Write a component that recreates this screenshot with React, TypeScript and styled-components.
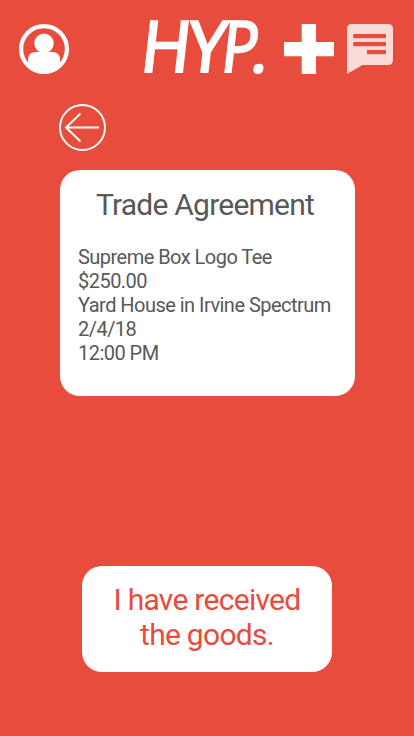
import React from "react";
import styled, { createGlobalStyle } from "styled-components";

const GlobalStyle = createGlobalStyle`
  * { box-sizing: border-box; }
  html, body { margin: 0; padding: 0; background: #e84c3d; }
  body { font-family: Roboto, "Liberation Sans", sans-serif; }
`;

const Screen = styled.main`
  width: 414px;
  height: 736px;
  background: #e84c3d;
  display: flex;
  flex-direction: column;
`;

const Header = styled.header`
  height: 104px;
  padding: 0 20px 0 19px;
  display: flex;
  align-items: flex-start;
`;

const IconButton = styled.button<{ $left?: number; $top?: number }>`
  flex: none;
  padding: 0;
  border: 0;
  background: none;
  margin: ${(p) => p.$top ?? 0}px 0 0 ${(p) => p.$left ?? 0}px;
  svg { display: block; }
`;

const Logo = styled.h1`
  margin: 0 0 0 75px;
  width: 128px;
  flex: none;
  svg { display: block; overflow: visible; }
  text {
    font-family: "Open Sans", sans-serif;
    font-size: 74px;
    font-weight: 600;
    fill: #fff;
  }
`;

const BackRow = styled.nav`
  display: flex;
  height: 66px;
  padding-left: 59px;
`;

const Card = styled.section`
  width: 295px;
  height: 226px;
  margin-left: 60px;
  padding: 17px 18px 0;
  border-radius: 20px;
  background: #fff;
  color: #585858;
`;

const Title = styled.h2`
  margin: 0 0 0 18px;
  font-size: 30px;
  line-height: 36px;
  font-weight: 400;
  letter-spacing: -0.78px;
  white-space: nowrap;
`;

const Details = styled.div`
  margin-top: 22px;
  font-size: 20px;
  line-height: 24px;
  letter-spacing: -0.53px;
  white-space: nowrap;
`;

const ConfirmButton = styled.button`
  width: 250px;
  height: 106px;
  margin: 170px 0 0 82px;
  padding: 0 0 4px;
  border: 0;
  border-radius: 20px;
  background: #fff;
  color: #e84c3d;
  font: 400 30px/35px Roboto, sans-serif;
  letter-spacing: -0.72px;
`;

const details = [
  "Supreme Box Logo Tee",
  "$250.00",
  "Yard House in Irvine Spectrum",
  "2/4/18",
  "12:00 PM",
];

export default function App() {
  return (
    <Screen>
      <GlobalStyle />
      <Header>
        <IconButton $top={24} aria-label="Profile">
          <svg width="50" height="50" viewBox="0 0 50 50">
            <circle cx="25" cy="25" r="22.9" fill="none" stroke="#fff" strokeWidth="4.2" />
            <circle cx="25" cy="19.3" r="9.7" fill="#fff" />
            <path d="M9 43V36Q9 28 17 28H33Q41 28 41 36V43Q34 50 25 50T9 43Z" fill="#fff" />
          </svg>
        </IconButton>
        <Logo>
          <svg width="128" height="100" viewBox="0 0 128 100">
            <text transform="translate(-6.3 73) skewX(-6.5) scale(.93 1)">H</text>
            <text transform="translate(39.2 73) skewX(-6.5) scale(.96 1)">Y</text>
            <text transform="translate(74.4 73) skewX(-6.5) scale(.84 1)">P</text>
            <text transform="translate(104.2 73) skewX(-6.5) scale(.95)">.</text>
          </svg>
        </Logo>
        <IconButton $top={24} $left={12} aria-label="Add">
          <svg width="50" height="50" viewBox="0 0 50 50" fill="#fff">
            <path d="M17.7 0H32V18H50V32.3H32V50H17.7V32.3H0V18H17.7Z" />
          </svg>
        </IconButton>
        <IconButton $top={24} $left={13} aria-label="Messages">
          <svg width="46" height="50" viewBox="0 0 46 50">
            <path d="M5 0H41Q46 0 46 5V36Q46 41 41 41H15.5L0 50V5Q0 0 5 0Z" fill="#fadbd8" />
            <path d="M6.3 10H39V14.2H6.3ZM6.3 18H39V22.2H6.3ZM20 26H39V30.2H20Z" fill="#e84c3d" />
          </svg>
        </IconButton>
      </Header>
      <BackRow>
        <IconButton aria-label="Back">
          <svg width="47" height="66" viewBox="0 0 47 66" fill="none" stroke="#fff" strokeWidth="1.9">
            <circle cx="23.5" cy="23.5" r="22.5" />
            <path d="M40 23.5H7M21.5 9.5L7 23.5L21.5 37.5" />
          </svg>
        </IconButton>
      </BackRow>
      <Card>
        <Title>Trade Agreement</Title>
        <Details>
          {details.map((line) => (
            <div key={line}>{line}</div>
          ))}
        </Details>
      </Card>
      <ConfirmButton>
        I have received
        <br />
        the goods.
      </ConfirmButton>
    </Screen>
  );
}
